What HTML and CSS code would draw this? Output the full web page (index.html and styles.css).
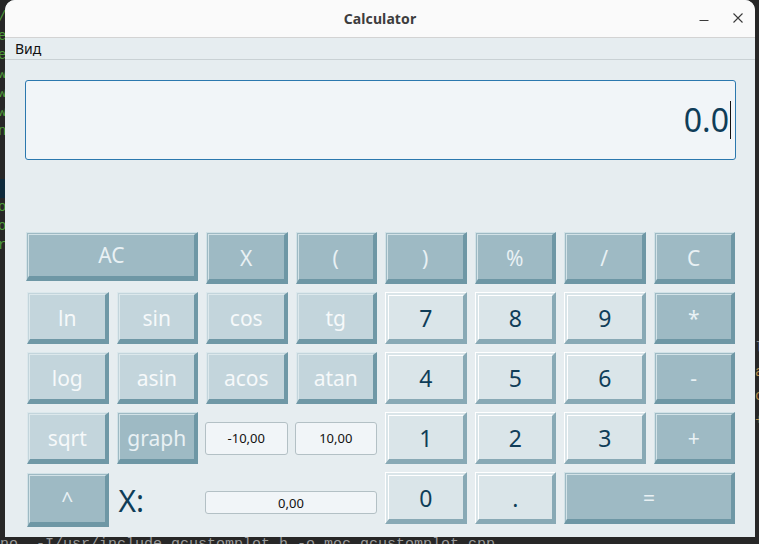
FILE: index.html
```html
<!DOCTYPE html>
<html lang="ru">
<head>
<meta charset="utf-8">
<title>Calculator</title>
<link rel="stylesheet" href="styles.css">
</head>
<body>
<div class="desktop">
  <pre class="terminal"><span class="g">/V</span>
<span class="g">e</span>
<span class="g">e</span>
<span class="g">w.</span>
<span class="g">w.</span>
<span class="g">w.</span>
<span class="g">n</span>


<span class="hl"> </span>
<span class="g">o</span>
<span class="g">o</span>
<span class="g">r</span>
</pre>
  <div class="term-bottom">no  -I/usr/include qcustomplot.h -o moc_qcustomplot.cpp</div>
  <div class="term-right"><span>l</span><span class="o">a</span><span class="o">c</span><span class="o">+</span></div>

  <div class="window">
    <header class="titlebar">
      <span class="title">Calculator</span>
      <div class="controls">
        <svg class="ctl" width="12" height="12" viewBox="0 0 12 12"><path d="M1.5 8.5h9" stroke="#3a3a3a" stroke-width="1.1" fill="none"/></svg>
        <svg class="ctl" width="12" height="12" viewBox="0 0 12 12"><path d="M1.5 1.5l9 9M10.5 1.5l-9 9" stroke="#3a3a3a" stroke-width="1.1" fill="none"/></svg>
      </div>
    </header>
    <nav class="menubar"><span class="menu-item">Вид</span></nav>
    <main class="main">
      <div class="display"><span class="value">0.0</span><span class="caret"></span></div>
      <div class="keys">
        <button class="btn op ac">AC</button>
        <button class="btn op">X</button>
        <button class="btn op">(</button>
        <button class="btn op">)</button>
        <button class="btn op">%</button>
        <button class="btn op">/</button>
        <button class="btn op">C</button>

        <button class="btn fn">ln</button>
        <button class="btn fn">sin</button>
        <button class="btn fn">cos</button>
        <button class="btn fn">tg</button>
        <button class="btn num">7</button>
        <button class="btn num">8</button>
        <button class="btn num">9</button>
        <button class="btn op">*</button>

        <button class="btn fn">log</button>
        <button class="btn fn">asin</button>
        <button class="btn fn">acos</button>
        <button class="btn fn">atan</button>
        <button class="btn num">4</button>
        <button class="btn num">5</button>
        <button class="btn num">6</button>
        <button class="btn op">-</button>

        <button class="btn fn">sqrt</button>
        <button class="btn op">graph</button>
        <div class="field range">-10,00</div>
        <div class="field range">10,00</div>
        <button class="btn num">1</button>
        <button class="btn num">2</button>
        <button class="btn num">3</button>
        <button class="btn op">+</button>

        <button class="btn op pow">^</button>
        <div class="xlabel">X:</div>
        <div class="field xval">0,00</div>
        <button class="btn num">0</button>
        <button class="btn num">.</button>
        <button class="btn op eq">=</button>
      </div>
    </main>
  </div>
</div>
</body>
</html>
```
FILE: styles.css
```css
* { box-sizing: border-box; }
html, body { margin: 0; padding: 0; }
body {
  background: #262626;
  width: 759px;
  height: 544px;
  overflow: hidden;
  font-family: "Noto Sans", "Open Sans", sans-serif;
}
.desktop {
  position: relative;
  width: 759px;
  height: 544px;
  background: #272727;
}
.terminal {
  position: absolute;
  left: -2px;
  top: 8px;
  margin: 0;
  font-family: "Liberation Mono", monospace;
  font-size: 14px;
  line-height: 19px;
  color: #7a7a7a;
}
.terminal .g { color: #4e9a3a; }
.terminal .hl { display: inline-block; width: 10px; height: 19px; background: #0e2a3c; }
.term-bottom {
  position: absolute;
  left: 0;
  top: 536px;
  font-family: "Liberation Mono", monospace;
  font-size: 15px;
  color: #9a9a9a;
  white-space: pre;
}
.term-right {
  position: absolute;
  left: 755px;
  top: 340px;
  display: flex;
  flex-direction: column;
  gap: 8px;
  font-family: "Liberation Mono", monospace;
  font-size: 14px;
  color: #8a8a8a;
}
.term-right .o { color: #b08a4a; }

.window {
  position: absolute;
  left: 5px;
  top: 0;
  width: 750px;
  height: 537px;
  background: #e6edf0;
  border-radius: 10px 10px 0 0;
  overflow: hidden;
  display: flex;
  flex-direction: column;
}
.titlebar {
  height: 38px;
  flex: none;
  background: #fafafa;
  border-bottom: 1px solid #d3d3d3;
  display: flex;
  align-items: center;
  justify-content: center;
  position: relative;
}
.title {
  font-weight: bold;
  font-size: 14px;
  color: #3d3d3d;
  letter-spacing: 0.1px;
}
.controls {
  position: absolute;
  right: 11px;
  top: 12px;
  display: flex;
  gap: 22px;
}
.menubar {
  height: 22px;
  flex: none;
  border-bottom: 1px solid #c9d1d4;
  display: flex;
  align-items: center;
  padding-left: 10px;
}
.menu-item {
  font-size: 14px;
  color: #111;
}
.main {
  flex: 1;
  padding: 20px 19px 0 20px;
}
.display {
  height: 80px;
  border: 1px solid #2b78ae;
  border-radius: 3px;
  background: #f1f5f8;
  display: flex;
  align-items: center;
  justify-content: flex-end;
  padding-right: 4px;
}
.value {
  font-size: 32px;
  color: #0f3d58;
  line-height: 1;
}
.caret {
  width: 1px;
  height: 38px;
  background: #111;
  margin-left: 1px;
}
.keys {
  margin: 72px 1px 0 2px;
  display: grid;
  grid-template-columns: repeat(8, 1fr);
  grid-template-rows: repeat(5, 52px);
  column-gap: 8px;
  row-gap: 8px;
}
.btn {
  font-family: inherit;
  font-size: 21px;
  padding: 2px 0 0 0;
  margin: 0;
  border-style: double solid solid double;
  border-width: 3px 4px 5px 3px;
  line-height: 1;
  cursor: default;
}
.op {
  background: #9ebac4;
  color: #e9f1f4;
  border-top-color: #d2e2e7;
  border-left-color: #d2e2e7;
  border-right-color: #6e97a5;
  border-bottom-color: #6e97a5;
}
.fn {
  background: #c3d5dc;
  color: #f6f9fa;
  border-top-color: #dce8ec;
  border-left-color: #dce8ec;
  border-right-color: #6f98a6;
  border-bottom-color: #6f98a6;
}
.num {
  background: #dae5e9;
  color: #0f3d58;
  font-size: 23px;
  border-top-color: #ffffff;
  border-left-color: #ffffff;
  border-right-color: #88a9b5;
  border-bottom-color: #88a9b5;
  border-width: 4px 4px 5px 4px;
}
.ac {
  grid-column: span 2;
  align-self: start;
  height: 49px;
  margin-left: -1px;
  padding-top: 0;
}
.eq { grid-column: span 2; }
.pow { height: 54px; margin-top: 1px; }
.field {
  background: #f1f5f8;
  border: 1px solid #b3c0c5;
  border-radius: 3px;
  font-size: 13px;
  color: #111;
  display: flex;
  align-items: center;
  justify-content: center;
}
.range {
  align-self: center;
  height: 33px;
  margin-left: -1px;
}
.xval {
  grid-column: span 2;
  align-self: end;
  height: 23px;
  margin-bottom: 10px;
  margin-left: -1px;
}
.xlabel {
  font-size: 30px;
  color: #0f3d58;
  display: flex;
  align-items: center;
  padding-left: 2px;
  padding-top: 4px;
}
```
